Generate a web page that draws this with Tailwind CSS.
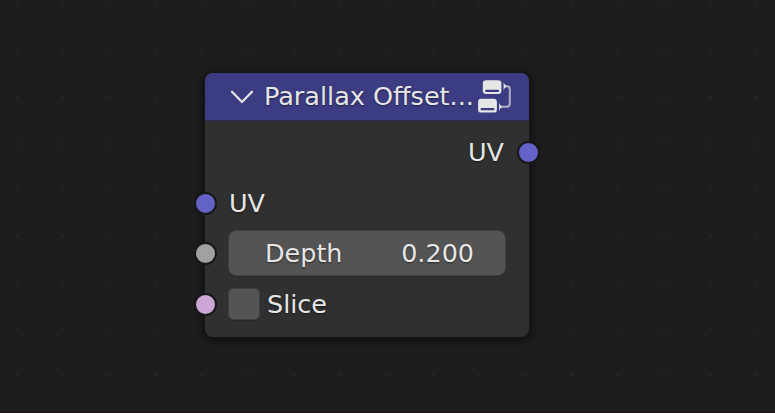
<!DOCTYPE html>
<html lang="en">
<head>
<meta charset="utf-8">
<title>Node editor</title>
<script src="https://cdn.jsdelivr.net/npm/@tailwindcss/browser@4"></script>
</head>
<body class="relative h-[413px] w-[775px] overflow-hidden border-b border-[#1c1118] bg-[#1d1d1d] font-['DejaVu_Sans',sans-serif] text-[25.45px] leading-none text-[#e6e6e6] [text-shadow:0_1px_2px_rgba(0,0,0,0.5)]">
  <!-- Canvas grid -->
  <svg class="absolute inset-0 size-full" aria-hidden="true">
    <defs>
      <pattern id="grid" x="-6.1" y="-18" width="46.22" height="46.22" patternUnits="userSpaceOnUse">
        <circle cx="23.11" cy="23.11" r="1.1" fill="#2a2a2a"/>
      </pattern>
    </defs>
    <rect width="775" height="413" fill="url(#grid)"/>
  </svg>

  <!-- Node -->
  <section class="absolute left-[205px] top-[73px] flex h-[264px] w-[324px] flex-col rounded-[8px] bg-[#303030] shadow-[0_0_0_1.5px_#151515,0_2px_9px_2px_rgba(0,0,0,0.55)]">
    <header class="flex h-[48px] shrink-0 items-center rounded-t-[8px] border-b border-[#2c2c57] bg-[#3c3c83] pl-[25px]">
      <svg class="h-[16px] w-[24px] shrink-0" viewBox="0 0.5 24 16" fill="none" stroke="#e6e6e6" stroke-width="2.2" stroke-linecap="round" stroke-linejoin="round"><path d="M2 3.2 12 13.4 22 3.2"/></svg>
      <h1 class="ml-[10px] w-[213px] shrink-0 whitespace-nowrap text-[25.5px]">Parallax Offset...</h1>
      <svg class="h-[36px] w-[36px] shrink-0" viewBox="477 79 36 36">
        <path d="M504 86.200h2.500q3.300 0 3.300 3.300v14q0 3.300-3.300 3.300H500" fill="none" stroke="#e6e6e6" stroke-opacity=".68" stroke-width="2"/>
        <rect x="482.8" y="80.2" width="18.6" height="13.8" rx="3.2" fill="#e6e6e6"/>
        <rect x="485.2" y="89.8" width="13.8" height="2.2" rx=".8" fill="#3c3c83"/>
        <rect x="478.1" y="98.8" width="18.8" height="13.8" rx="3.2" fill="#e6e6e6"/>
        <rect x="480.6" y="108" width="13.8" height="2.2" rx=".8" fill="#3c3c83"/>
        <path d="M503.600 82.200q.3 2.200 3.300 4-3 1.800-3.300 4.200zM499.100 102.700q.3 2.200 3.300 4-3 1.800-3.300 4.200z" fill="#e6e6e6"/>
      </svg>
    </header>
    <div class="flex flex-col pt-[5px]">
      <div class="flex h-[51px] items-center justify-end">
        <span class="mr-[13px] pt-[2px]">UV</span>
        <i class="-mr-[11px] mt-px size-[23px] shrink-0 rounded-full border-2 border-[#171717] bg-[#6363c7]"></i>
      </div>
      <div class="flex h-[51px] items-center">
        <i class="-ml-[11px] mt-px size-[23px] shrink-0 rounded-full border-2 border-[#171717] bg-[#6363c7]"></i>
        <span class="ml-[12px] pt-[2px]">UV</span>
      </div>
      <div class="flex h-[51px] items-center">
        <i class="-ml-[11px] size-[23px] shrink-0 rounded-full border-2 border-[#171717] bg-[#a1a1a1]"></i>
        <div class="mb-px ml-[11px] flex h-[46px] w-[278px] items-center justify-between rounded-[8px] border border-[#3f3f3f] bg-[#545454] pl-[36px] pr-[31px] pt-px shadow-[0_1px_0_#292929]">
          <span>Depth</span><span>0.200</span>
        </div>
      </div>
      <div class="flex h-[51px] items-center">
        <i class="-ml-[11px] size-[23px] shrink-0 rounded-full border-2 border-[#171717] bg-[#cca6d6]"></i>
        <div class="mb-px ml-[11px] size-[32px] rounded-[5px] border border-[#3f3f3f] bg-[#545454] shadow-[0_1px_0_#292929]"></div>
        <span class="ml-[7px] pt-px">Slice</span>
      </div>
    </div>
  </section>
</body>
</html>
